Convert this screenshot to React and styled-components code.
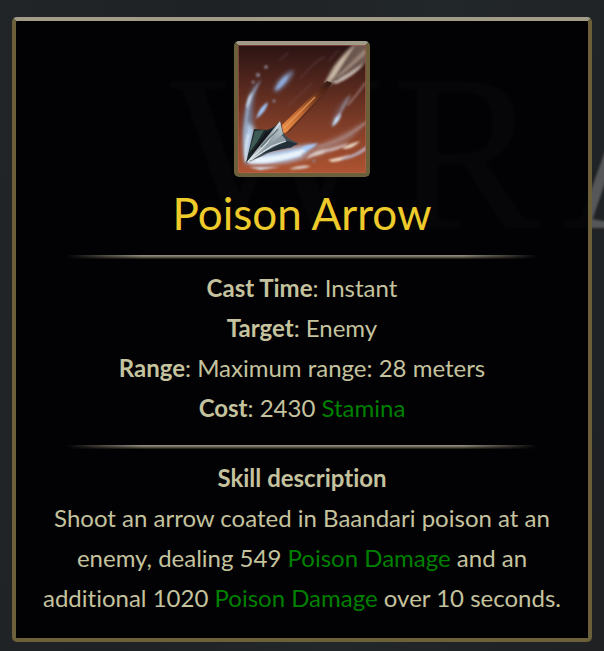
import React from "react";
import styled, { createGlobalStyle } from "styled-components";

const GlobalStyle = createGlobalStyle`
  * { box-sizing: border-box; }
  body { margin: 0; background: #202224; }
`;

const Page = styled.main`
  position: relative;
  isolation: isolate;
  overflow: hidden;
  min-height: 100vh;
  padding: 17px 12px 8px;
  background: linear-gradient(100deg, #222528 0%, #1f2224 30%, #22272a 62%, #1f2123 100%);
  font-family: Lato, "Liberation Sans", sans-serif;
  font-size: 24px;
  font-variant-ligatures: none;
  line-height: 40px;
  color: #c5c29e;
`;

const Backdrop = styled.svg`
  position: absolute;
  z-index: -1;
  top: 0;
  left: 0;
  width: 800px;
  height: 300px;
  font-family: "Liberation Serif", serif;
  font-size: 222px;
  filter: blur(1px);
`;

const Card = styled.article`
  display: flex;
  flex-direction: column;
  align-items: center;
  padding: 20px;
  border: 4px solid #6b6039;
  border-top-color: #a09c88;
  border-radius: 5px;
  background: rgba(0, 0, 2, 0.93);
  text-align: center;
`;

const SkillIcon = styled.svg`
  width: 136px;
  height: 136px;
  border: 4px solid #6b6039;
  border-top-color: #a09c88;
  border-radius: 5px;
`;

const Title = styled.h1`
  margin: 8px 0 14px;
  font-size: 44px;
  font-weight: 400;
  line-height: 56px;
  color: #eeca2a;
`;

const Divider = styled.hr`
  width: 472px;
  max-width: 100%;
  height: 4px;
  margin: 0;
  border: 0;
  background: linear-gradient(#8f897b 0 1px, #777064 1px 2px, #514b40 2px 3px, #2b261e 3px);
  mask-image: linear-gradient(90deg, transparent, #0008 8%, #000 16%, #000 84%, #0008 92%, transparent);
`;

const Stats = styled.dl`
  margin: 9px 0 17px;
`;

const Stat = styled.div`
  dt, dd {
    display: inline;
    margin: 0;
  }
  dt b { font-weight: 700; }
`;

const Description = styled.section`
  margin-top: 9px;
`;

const Heading = styled.h2`
  margin: 0;
  font-size: 24px;
  font-weight: 700;
  line-height: 40px;
`;

const Copy = styled.p`
  margin: 0;
`;

const Keyword = styled.span`
  color: #008000;
`;

const stats = [
  { label: "Cast Time", value: "Instant" },
  { label: "Target", value: "Enemy" },
  { label: "Range", value: "Maximum range: 28 meters" },
  { label: "Cost", value: "2430", keyword: "Stamina" },
];

function PoisonArrowIcon() {
  return (
    <SkillIcon viewBox="0 0 128 128" role="img" aria-label="Poison Arrow">
      <defs>
        <linearGradient id="sky" x2="0" y2="1">
          <stop offset="0" stopColor="#2b1414" />
          <stop offset=".25" stopColor="#4c231b" />
          <stop offset=".6" stopColor="#7b3b27" />
          <stop offset="1" stopColor="#ae5431" />
        </linearGradient>
        <linearGradient id="shaft" x1="0" y1="1" x2="1" y2="0">
          <stop offset="0" stopColor="#f09449" />
          <stop offset=".4" stopColor="#bd6530" />
          <stop offset=".75" stopColor="#5e2e1b" />
          <stop offset="1" stopColor="#2c160f" />
        </linearGradient>
        <linearGradient id="steel" x1="0" y1="1" x2="1" y2="0">
          <stop offset="0" stopColor="#e8eef2" />
          <stop offset=".5" stopColor="#8c989f" />
          <stop offset="1" stopColor="#bccbd0" />
        </linearGradient>
        <filter id="soft"><feGaussianBlur stdDeviation=".6" /></filter>
        <filter id="spray" x="-10%" y="-10%" width="120%" height="120%"><feGaussianBlur stdDeviation=".9" /></filter>
        <filter id="mist" x="-30%" y="-30%" width="160%" height="160%"><feGaussianBlur stdDeviation="2" /></filter>
      </defs>
      <rect width="128" height="128" fill="url(#sky)" />

      <g filter="url(#mist)">
        <path d="M7 120Q2 83 9 60Q13 43 22 34Q13 53 15 72Q17 96 12 118Z" fill="#7182a4" opacity=".8" />
        <path d="M10 119Q37 105 67 103Q91 99 128 76Q111 101 79 111Q45 123 10 119Z" fill="#b2a5ae" opacity=".45" />
        <path d="M36 46Q40 31 56 25Q52 37 40 46Z" fill="#7f8fb5" />
        <path d="M9 118L28 107Q51 103 75 99L62 113Q36 121 9 118Z" fill="#b4cced" />
        <path d="M8 117Q3 94 9 77L17 84L12 114Z" fill="#b2cbe8" />
        <path d="M95 80Q98 65 112 52" fill="none" stroke="#818195" strokeWidth="3" opacity=".6" />
      </g>

      <g filter="url(#spray)">
        <path d="M7 115Q4 83 9 58Q14 44 24 34Q14 49 11 66Q7 91 10 115Z" fill="#98abc9" opacity=".8" />
        <path d="M8 62Q9 52 14 47Q13 56 9 63Z" fill="#cadcf0" />
        <path d="M37 46Q41 35 50 30Q49 38 37 46Z" fill="#8facdc" />
        <path d="M18 74Q21 62 30 57Q29 66 18 74Z" fill="#a0c5f7" />
        <path d="M94 82Q96 71 103 67Q104 75 94 82Z" fill="#c5ddf8" />
        <path d="M99 73Q104 57 113 49Q108 61 101 72Z" fill="#9991a0" opacity=".7" />
        <path d="M64 103Q69 100 80 98Q76 103 71 104L66 108Z" fill="#a9cfff" />
        <path d="M68 114Q76 104 92 104Q87 109 76 111Z" fill="#d9cbc5" />
        <path d="M84 105Q97 103 111 97Q104 105 88 107Z" fill="#c9b3b3" />
        <path d="M104 103Q113 98 122 96Q116 103 107 104Z" fill="#ead8c6" />
        <path d="M90 115Q103 112 112 110Q107 116 94 117Z" fill="#efd9c8" />
        <path d="M104 113Q121 108 128 101L128 105Q117 113 104 115Z" fill="#b8adc0" />
        <path d="M51 124Q62 119 73 121Q64 125 51 124Z" fill="#dccfc9" />
        <path d="M11 122Q23 122 42 122L22 125Z" fill="#d2dcea" />
        <g fill="none" strokeLinecap="round">
          <path d="M62 34Q76 17 86 12M42 15L50 8M101 5Q94 12 91 16M50 61Q64 48 74 38" stroke="#7d5e6b" opacity=".6" />
          <path d="M110 60Q122 46 127 38M112 89L128 77M80 102Q107 94 127 79" stroke="#b59c9a" strokeWidth="1.5" opacity=".65" />
          <path d="M12 117Q32 118 62 109M17 114Q39 113 65 106" stroke="#e9f3fb" strokeWidth="3" />
          <path d="M8 116Q7 102 10 90" stroke="#e2effa" strokeWidth="2" />
        </g>
      </g>
      <g fill="#8e8797" filter="url(#spray)">
        <circle cx="28" cy="22" r="1.8" /><circle cx="20" cy="30" r="2" />
        <circle cx="15" cy="37" r="1.5" /><circle cx="36" cy="56" r="1.5" />
        <circle cx="76" cy="116" r="1.5" />
      </g>

      <g filter="url(#spray)">
        <path d="M86 38Q92 24 98 17Q108 4 118 -3L128 -3L128 17Q118 31 98 38L91 41Z" fill="#79655c" opacity=".85" />
        <path d="M87 38L97 21Q107 8 117 0L106 17L94 36Z" fill="#bdab98" />
        <path d="M95 37Q111 29 126 18Q116 32 98 39Z" fill="#c2b4ad" />
        <path d="M94 35Q110 21 128 3L128 9L105 29Z" fill="#9a8478" />
        <path d="M94 35Q106 23 120 3M98 36L124 14" fill="none" stroke="#5c4943" />
        <path d="M93 33L106 13" fill="none" stroke="#ded0be" />
      </g>
      <g filter="url(#soft)">
        <path d="M44 80L89 36L94 38L92 41L50 86L45 89Z" fill="url(#shaft)" />
        <path d="M46 83L77 52" stroke="#f0a15d" strokeWidth="1.3" opacity=".8" />
        <path d="M50 87L92 43" stroke="#542a1b" strokeWidth="1.2" opacity=".7" />
      </g>

      <g filter="url(#soft)">
        <path d="M8 118L16 84L29 85Q37 82 42 77L38 88Z" fill="#1d2b2e" />
        <path d="M11 108L17 86L26 85L19 97Z" fill="#3e5a55" />
        <path d="M12 110L28 87L37 84L27 97Z" fill="#14191d" />
        <path d="M8 118L42 76L45 87Q48 94 60 98L53 103Q39 103 24 111Z" fill="#414d56" />
        <path d="M8 118L42 76L45 89L32 101Z" fill="url(#steel)" />
        <path d="M14 114L44 90L48 95Z" fill="#8e9ba3" />
        <path d="M22 109L50 96L60 99L49 103Z" fill="#202d39" />
        <path d="M10 117L29 98L42 78M13 115L34 101L48 96" fill="none" stroke="#dbe4e7" strokeWidth="1.2" />
        <path d="M23 102L40 84" fill="none" stroke="#69777f" strokeWidth="1.5" />
      </g>
      <rect x=".5" y=".5" width="127" height="127" fill="none" stroke="#bd6857" opacity=".5" />
    </SkillIcon>
  );
}

export default function App() {
  return (
    <>
      <GlobalStyle />
      <Page>
        <Backdrop aria-hidden="true" fill="#565758">
          <text x="170" y="228">W</text>
          <text x="392" y="228">R</text>
          <text x="562" y="228">A</text>
        </Backdrop>
        <Card>
          <PoisonArrowIcon />
          <Title>Poison Arrow</Title>
          <Divider />
          <Stats>
            {stats.map(({ label, value, keyword }) => (
              <Stat key={label}>
                <dt><b>{label}</b>: </dt>
                <dd>{value}{keyword && <> <Keyword>{keyword}</Keyword></>}</dd>
              </Stat>
            ))}
          </Stats>
          <Divider />
          <Description>
            <Heading>Skill description</Heading>
            <Copy>
              Shoot an arrow coated in Baandari poison at an enemy, dealing 549{" "}
              <Keyword>Poison Damage</Keyword> and an additional 1020{" "}
              <Keyword>Poison Damage</Keyword> over 10 seconds.
            </Copy>
          </Description>
        </Card>
      </Page>
    </>
  );
}
